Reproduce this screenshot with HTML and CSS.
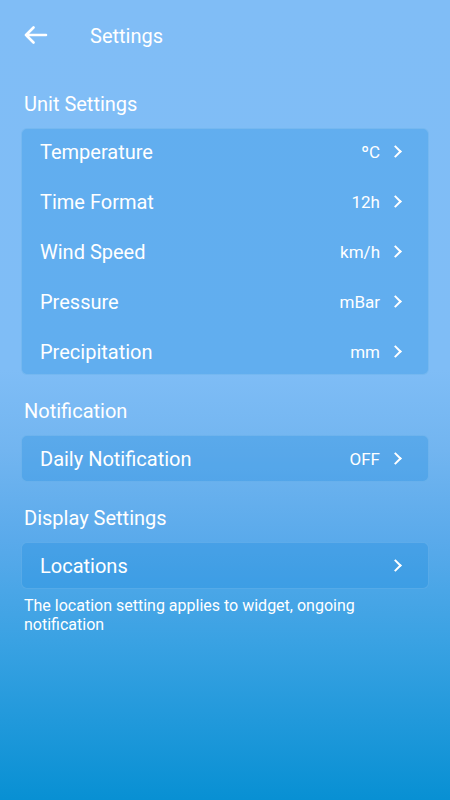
FILE: index.html
```html
<!DOCTYPE html>
<html>
<head>
<meta charset="utf-8">
<link rel="stylesheet" href="styles.css">
</head>
<body>
<div class="screen">
  <header class="topbar">
    <svg class="back" width="24" height="18" viewBox="0 0 24 18"><path d="M2 9H22M2 9L9.5 1.5M2 9L9.5 16.5" stroke="#fff" stroke-width="2.6" fill="none" stroke-linecap="round" stroke-linejoin="round"/></svg>
    <span class="title">Settings</span>
  </header>

  <h2 class="section first">Unit Settings</h2>
  <div class="card multi">
    <div class="row"><span class="label">Temperature</span><span class="value">ºC</span><span class="chev"></span></div>
    <div class="row"><span class="label">Time Format</span><span class="value">12h</span><span class="chev"></span></div>
    <div class="row"><span class="label">Wind Speed</span><span class="value">km/h</span><span class="chev"></span></div>
    <div class="row"><span class="label">Pressure</span><span class="value">mBar</span><span class="chev"></span></div>
    <div class="row"><span class="label">Precipitation</span><span class="value">mm</span><span class="chev"></span></div>
  </div>

  <h2 class="section">Notification</h2>
  <div class="card single">
    <div class="row"><span class="label">Daily Notification</span><span class="value">OFF</span><span class="chev"></span></div>
  </div>

  <h2 class="section">Display Settings</h2>
  <div class="card single">
    <div class="row"><span class="label">Locations</span><span class="value"></span><span class="chev"></span></div>
  </div>
  <p class="note">The location setting applies to widget, ongoing notification</p>
</div>
</body>
</html>
```

FILE: styles.css
```css
html, body {
  margin: 0;
  padding: 0;
}
body {
  width: 450px;
  height: 800px;
  overflow: hidden;
  font-family: Roboto, "Noto Sans", sans-serif;
  color: #fff;
  background: linear-gradient(to bottom, #80bdf6 0px, #7fbdf6 370px, #72b5f0 450px, #5aaaeb 540px, #3aa2e3 640px, #0890d3 800px);
}
.screen {
  display: flex;
  flex-direction: column;
  padding: 0 21px 0 21px;
}
.topbar {
  display: flex;
  align-items: center;
  height: 70px;
  padding-left: 3px;
}
.back {
  display: block;
  margin-top: -1px;
}
.title {
  font-size: 20px;
  margin-left: 42px;
  margin-top: 1px;
}
.section {
  font-size: 20px;
  font-weight: 400;
  margin: 0;
  padding-left: 3px;
  height: 60px;
  line-height: 24px;
  padding-top: 24px;
  box-sizing: border-box;
}
.section.first {
  height: 58px;
  padding-top: 22px;
}
.card {
  background: rgba(30, 140, 222, 0.3);
  border: 1px solid rgba(255, 255, 255, 0.13);
  border-radius: 6px;
  box-sizing: border-box;
  display: flex;
  flex-direction: column;
}
.card.multi {
  height: 247px;
}
.card.multi .row {
  flex: none;
  height: 50px;
}
.card.multi .row:first-child {
  margin-top: -2.5px;
}
.card.single {
  height: 47px;
}
.card.single .row { flex: 1; }
.row {
  display: flex;
  align-items: center;
  padding: 0 26px 0 18px;
  font-size: 20px;
}
.label {
  flex: 1;
}
.value {
  font-size: 17px;
  margin-right: 11px;
}
.chev {
  width: 7px;
  height: 7px;
  border-top: 2px solid #fff;
  border-right: 2px solid #fff;
  transform: rotate(45deg);
  margin-right: 2px;
}
.note {
  margin: 7px 0 0 3px;
  font-size: 16px;
  line-height: 19px;
}
```
